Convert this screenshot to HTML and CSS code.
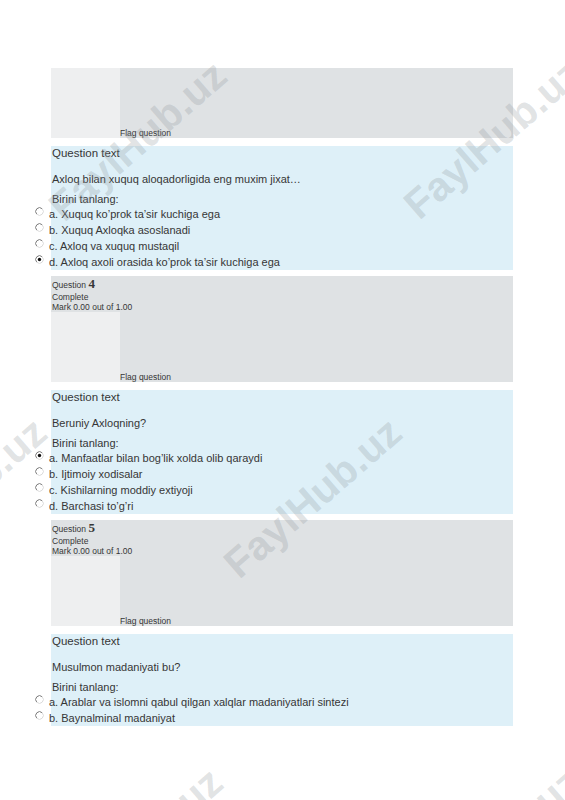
FILE: index.html
```html
<!DOCTYPE html>
<html lang="uz">
<head>
<meta charset="utf-8">
<title>Quiz review</title>
<link rel="stylesheet" href="styles.css">
</head>
<body>
<div class="page">

  <div class="info">
    <div class="info-body">
      <div class="info-side"></div>
      <div class="flag">Flag question</div>
    </div>
  </div>
  <div class="content">
    <div class="qtext-label">Question text</div>
    <div class="qtext">Axloq bilan xuquq aloqadorligida eng muxim jixat…</div>
    <div class="prompt">Birini tanlang:</div>
    <div class="answer">
      <div class="row"><span class="radio"><svg width="9" height="9" viewBox="0 0 9 9"><circle cx="4.5" cy="4.5" r="3.8" fill="#fff"/><path d="M1.8 7.2 A3.8 3.8 0 0 1 7.2 1.8" fill="none" stroke="#7a7a7a" stroke-width="1"/><path d="M7.2 1.8 A3.8 3.8 0 0 1 1.8 7.2" fill="none" stroke="#dadada" stroke-width="1"/></svg></span><span>a. Xuquq ko’prok ta’sir kuchiga ega</span></div>
      <div class="row"><span class="radio"><svg width="9" height="9" viewBox="0 0 9 9"><circle cx="4.5" cy="4.5" r="3.8" fill="#fff"/><path d="M1.8 7.2 A3.8 3.8 0 0 1 7.2 1.8" fill="none" stroke="#7a7a7a" stroke-width="1"/><path d="M7.2 1.8 A3.8 3.8 0 0 1 1.8 7.2" fill="none" stroke="#dadada" stroke-width="1"/></svg></span><span>b. Xuquq Axloqka asoslanadi</span></div>
      <div class="row"><span class="radio"><svg width="9" height="9" viewBox="0 0 9 9"><circle cx="4.5" cy="4.5" r="3.8" fill="#fff"/><path d="M1.8 7.2 A3.8 3.8 0 0 1 7.2 1.8" fill="none" stroke="#7a7a7a" stroke-width="1"/><path d="M7.2 1.8 A3.8 3.8 0 0 1 1.8 7.2" fill="none" stroke="#dadada" stroke-width="1"/></svg></span><span>c. Axloq va xuquq mustaqil</span></div>
      <div class="row"><span class="radio"><svg width="9" height="9" viewBox="0 0 9 9"><circle cx="4.5" cy="4.5" r="3.8" fill="#fff"/><path d="M1.8 7.2 A3.8 3.8 0 0 1 7.2 1.8" fill="none" stroke="#7a7a7a" stroke-width="1"/><path d="M7.2 1.8 A3.8 3.8 0 0 1 1.8 7.2" fill="none" stroke="#dadada" stroke-width="1"/><circle cx="4.5" cy="4.5" r="1.7" fill="#111"/></svg></span><span>d. Axloq axoli orasida ko’prok ta’sir kuchiga ega</span></div>
    </div>
  </div>

  <div class="info">
    <div class="info-head">
      <div class="qno-line">Question <span class="qno">4</span></div>
      <div>Complete</div>
      <div>Mark 0.00 out of 1.00</div>
    </div>
    <div class="info-body">
      <div class="info-side"></div>
      <div class="flag">Flag question</div>
    </div>
  </div>
  <div class="content">
    <div class="qtext-label">Question text</div>
    <div class="qtext">Beruniy Axloqning?</div>
    <div class="prompt">Birini tanlang:</div>
    <div class="answer">
      <div class="row"><span class="radio"><svg width="9" height="9" viewBox="0 0 9 9"><circle cx="4.5" cy="4.5" r="3.8" fill="#fff"/><path d="M1.8 7.2 A3.8 3.8 0 0 1 7.2 1.8" fill="none" stroke="#7a7a7a" stroke-width="1"/><path d="M7.2 1.8 A3.8 3.8 0 0 1 1.8 7.2" fill="none" stroke="#dadada" stroke-width="1"/><circle cx="4.5" cy="4.5" r="1.7" fill="#111"/></svg></span><span>a. Manfaatlar bilan bog’lik xolda olib qaraydi</span></div>
      <div class="row"><span class="radio"><svg width="9" height="9" viewBox="0 0 9 9"><circle cx="4.5" cy="4.5" r="3.8" fill="#fff"/><path d="M1.8 7.2 A3.8 3.8 0 0 1 7.2 1.8" fill="none" stroke="#7a7a7a" stroke-width="1"/><path d="M7.2 1.8 A3.8 3.8 0 0 1 1.8 7.2" fill="none" stroke="#dadada" stroke-width="1"/></svg></span><span>b. Ijtimoiy xodisalar</span></div>
      <div class="row"><span class="radio"><svg width="9" height="9" viewBox="0 0 9 9"><circle cx="4.5" cy="4.5" r="3.8" fill="#fff"/><path d="M1.8 7.2 A3.8 3.8 0 0 1 7.2 1.8" fill="none" stroke="#7a7a7a" stroke-width="1"/><path d="M7.2 1.8 A3.8 3.8 0 0 1 1.8 7.2" fill="none" stroke="#dadada" stroke-width="1"/></svg></span><span>c. Kishilarning moddiy extiyoji</span></div>
      <div class="row"><span class="radio"><svg width="9" height="9" viewBox="0 0 9 9"><circle cx="4.5" cy="4.5" r="3.8" fill="#fff"/><path d="M1.8 7.2 A3.8 3.8 0 0 1 7.2 1.8" fill="none" stroke="#7a7a7a" stroke-width="1"/><path d="M7.2 1.8 A3.8 3.8 0 0 1 1.8 7.2" fill="none" stroke="#dadada" stroke-width="1"/></svg></span><span>d. Barchasi to’g’ri</span></div>
    </div>
  </div>

  <div class="info">
    <div class="info-head">
      <div class="qno-line">Question <span class="qno">5</span></div>
      <div>Complete</div>
      <div>Mark 0.00 out of 1.00</div>
    </div>
    <div class="info-body">
      <div class="info-side"></div>
      <div class="flag">Flag question</div>
    </div>
  </div>
  <div class="content">
    <div class="qtext-label">Question text</div>
    <div class="qtext">Musulmon madaniyati bu?</div>
    <div class="prompt">Birini tanlang:</div>
    <div class="answer">
      <div class="row"><span class="radio"><svg width="9" height="9" viewBox="0 0 9 9"><circle cx="4.5" cy="4.5" r="3.8" fill="#fff"/><path d="M1.8 7.2 A3.8 3.8 0 0 1 7.2 1.8" fill="none" stroke="#7a7a7a" stroke-width="1"/><path d="M7.2 1.8 A3.8 3.8 0 0 1 1.8 7.2" fill="none" stroke="#dadada" stroke-width="1"/></svg></span><span>a. Arablar va islomni qabul qilgan xalqlar madaniyatlari sintezi</span></div>
      <div class="row"><span class="radio"><svg width="9" height="9" viewBox="0 0 9 9"><circle cx="4.5" cy="4.5" r="3.8" fill="#fff"/><path d="M1.8 7.2 A3.8 3.8 0 0 1 7.2 1.8" fill="none" stroke="#7a7a7a" stroke-width="1"/><path d="M7.2 1.8 A3.8 3.8 0 0 1 1.8 7.2" fill="none" stroke="#dadada" stroke-width="1"/></svg></span><span>b. Baynalminal madaniyat</span></div>
    </div>
  </div>

</div>

<div class="wm-layer" aria-hidden="true">
  <span class="wm wm1">FaylHub.uz</span>
  <span class="wm wm2">FaylHub.uz</span>
  <span class="wm wm3">FaylHub.uz</span>
  <span class="wm wm4">FaylHub.uz</span>
  <span class="wm wm5">FaylHub.uz</span>
  <span class="wm wm6">FaylHub.uz</span>
</div>
</body>
</html>
```
FILE: styles.css
```css
html, body {
  margin: 0;
  padding: 0;
  background: #ffffff;
}

body {
  font-family: "Liberation Sans", Arial, sans-serif;
  color: #363636;
  width: 565px;
  height: 800px;
  overflow: hidden;
  position: relative;
}

.page {
  margin-left: 51px;
  width: 462px;
  padding-top: 68px;
}

.info {
  background: #dfe2e4;
  margin-bottom: 8px;
}

.info-head {
  padding: 1px 0 0 1px;
  font-size: 8.5px;
  line-height: 10px;
}

.qno-line {
  line-height: 13px;
}

.qno {
  font-family: "Liberation Serif", "Times New Roman", serif;
  font-weight: bold;
  font-size: 13px;
}

.info-body {
  display: flex;
  height: 70px;
}

.info-side {
  width: 69px;
  flex: none;
  background: #eeeff0;
}

.flag {
  align-self: flex-end;
  font-size: 8.5px;
  line-height: 10px;
}

.content {
  background: #def0f8;
  margin-bottom: 6px;
  padding-left: 1px;
}

.qtext-label {
  font-size: 11.5px;
  line-height: 14px;
}

.qtext {
  font-size: 11px;
  line-height: 14px;
  margin-top: 12px;
}

.prompt {
  font-size: 11px;
  line-height: 14px;
  margin-top: 6px;
}

.row {
  display: flex;
  height: 16px;
  margin-left: -19px;
  font-size: 11px;
  line-height: 16px;
}

.radio {
  width: 16px;
  flex: none;
  display: flex;
  align-items: flex-start;
  padding-top: 1px;
  padding-left: 1.5px;
  box-sizing: border-box;
}

.radio svg {
  display: block;
}

.wm-layer {
  position: absolute;
  top: 0;
  left: 0;
  width: 565px;
  height: 800px;
  overflow: hidden;
  pointer-events: none;
}

.wm {
  position: absolute;
  font-family: "Liberation Sans", Arial, sans-serif;
  font-weight: bold;
  font-size: 41px;
  line-height: 1;
  white-space: nowrap;
  color: rgba(140, 148, 152, 0.27);
  transform: translate(-50%, -50%) rotate(-41deg);
}

.wm1 { left: 138px; top: 141px; }
.wm2 { left: 493px; top: 139px; }
.wm3 { left: -42px; top: 498px; }
.wm4 { left: 313px; top: 498px; }
.wm5 { left: 134px; top: 848px; }
.wm6 { left: 492px; top: 848px; }
```
